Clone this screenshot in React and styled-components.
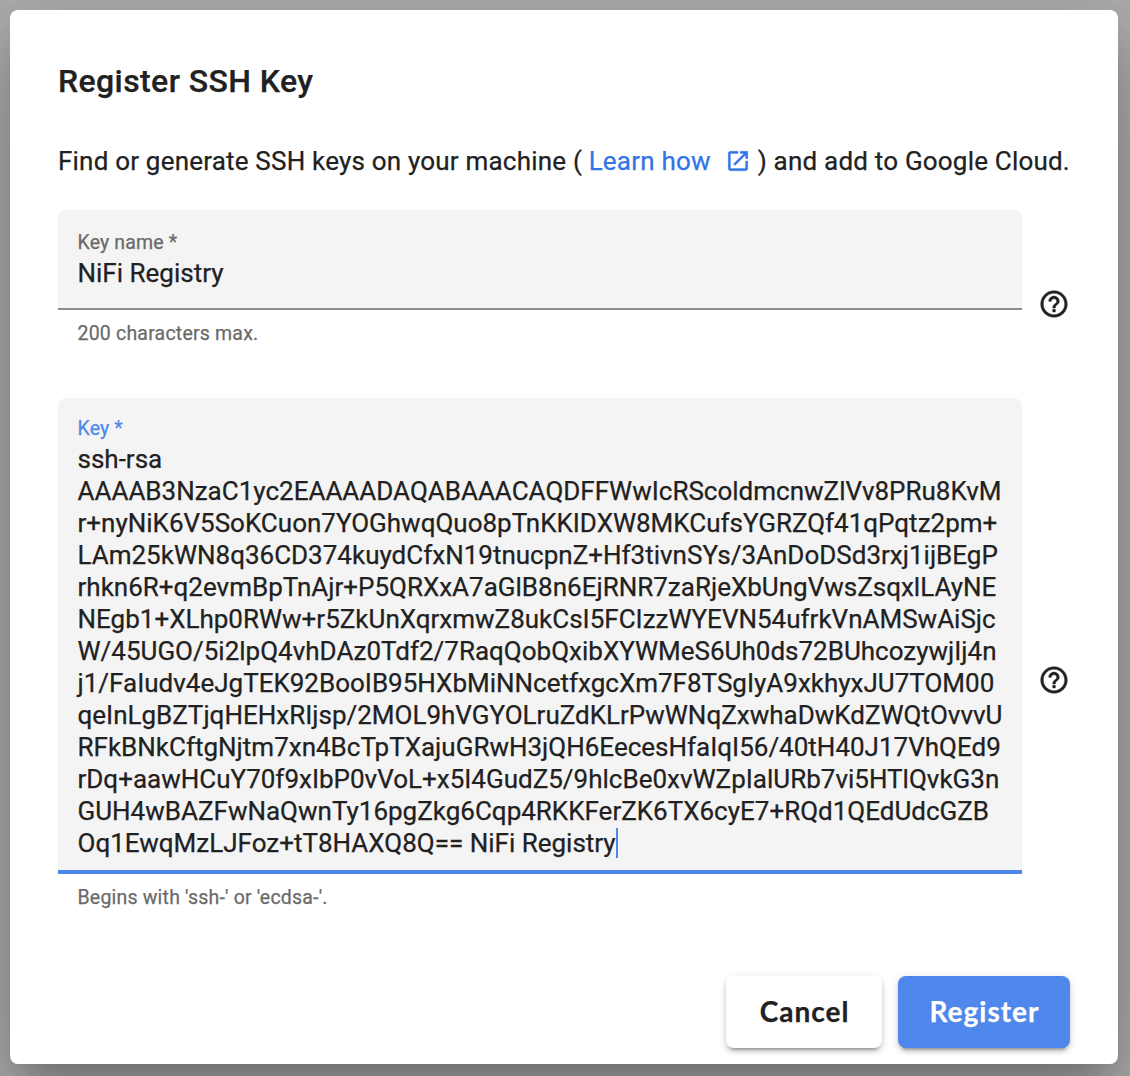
import React from "react";
import styled, { createGlobalStyle } from "styled-components";

const GlobalStyle = createGlobalStyle`
  *, *::before, *::after { box-sizing: border-box; }
  html, body { margin: 0; height: 100%; }
  body {
    background: #adadad;
    font-family: Roboto, "Liberation Sans", sans-serif;
    color: #212121;
    overflow: hidden;
    -webkit-text-stroke: 0.25px currentColor;
  }
`;

const Backdrop = styled.div`
  width: 1130px;
  height: 1076px;
  padding: 10px 12px 12px 10px;
  display: flex;
`;

const Dialog = styled.section`
  flex: none;
  width: 1108px;
  display: flex;
  flex-direction: column;
  padding: 48px 48px 16px;
  background: #fff;
  border-radius: 8px;
  box-shadow: 0 22px 30px -14px rgba(0, 0, 0, 0.2),
    0 48px 76px 6px rgba(0, 0, 0, 0.14), 0 18px 92px 16px rgba(0, 0, 0, 0.12);
`;

const Title = styled.h1`
  margin: 0;
  font-size: 32px;
  line-height: 46px;
  font-weight: 500;
  letter-spacing: 0.4px;
`;

const Intro = styled.p`
  margin: 36px 0 0;
  height: 42px;
  display: flex;
  align-items: center;
  font-size: 26px;
  line-height: 42px;
  letter-spacing: 0.2px;
  white-space: pre;
`;

const Link = styled.a`
  display: flex;
  align-items: center;
  color: #3174e5;
`;

const LinkIcon = styled.svg`
  width: 26px;
  height: 26px;
  margin: 0 7px 0 14px;
  fill: currentColor;
  stroke: currentColor;
  stroke-width: 0.3px;
`;

const FieldRow = styled.div`
  display: flex;
  align-items: center;
  justify-content: space-between;
  width: 1012px;
  height: ${(p) => p.$height}px;
  margin-top: ${(p) => p.$top}px;
`;

const Field = styled.div`
  width: 964px;
  height: 100%;
`;

const FieldBox = styled.div`
  height: ${(p) => p.$height}px;
  padding: ${(p) => (p.$focused ? 19 : 21)}px 19.5px 0;
  background: #f4f4f4;
  border-radius: 8px 8px 0 0;
  border-bottom: ${(p) => (p.$focused ? "4px solid #4e86ea" : "2px solid #8c8c8c")};
`;

const Label = styled.div`
  font-size: 19.5px;
  line-height: 24px;
  letter-spacing: 0.15px;
  color: ${(p) => (p.$focused ? "#4f87ec" : "#6a6a6a")};
`;

const Value = styled.div`
  margin-top: 2px;
  font-size: 26px;
  line-height: 32px;
  white-space: pre;
`;

const Caret = styled.span`
  display: inline-block;
  width: 2px;
  height: 30px;
  margin-right: -2px;
  vertical-align: -6px;
  background: #4e86ea;
`;

const Hint = styled.div`
  padding: 12px 19.5px 0;
  font-size: 19.5px;
  line-height: 24px;
  letter-spacing: 0.2px;
  color: #6a6a6a;
`;

const HelpSvg = styled.svg`
  width: 32px;
  height: 32px;
  fill: #212121;
  stroke: #212121;
  stroke-width: 0.3px;
`;

const Actions = styled.footer`
  display: flex;
  justify-content: flex-end;
  gap: 16px;
  margin-top: auto;
  width: 1012px;
`;

const Button = styled.button`
  width: ${(p) => p.$width}px;
  height: 72px;
  padding: 0 0 2px 1px;
  border: 0;
  border-radius: 8px;
  background: ${(p) => (p.$primary ? "#4f87ed" : "#fff")};
  color: ${(p) => (p.$primary ? "#fff" : "#212121")};
  font-family: Lato, "Open Sans", sans-serif;
  font-size: 28px;
  font-weight: 700;
  letter-spacing: 1px;
  box-shadow: 0 6px 2px -4px rgba(0, 0, 0, 0.2), 0 4px 4px rgba(0, 0, 0, 0.14),
    0 2px 10px rgba(0, 0, 0, 0.12);
`;

const keyLines = [
  "ssh-rsa",
  "AAAAB3NzaC1yc2EAAAADAQABAAACAQDFFWwIcRScoldmcnwZlVv8PRu8KvM",
  "r+nyNiK6V5SoKCuon7YOGhwqQuo8pTnKKIDXW8MKCufsYGRZQf41qPqtz2pm+",
  "LAm25kWN8q36CD374kuydCfxN19tnucpnZ+Hf3tivnSYs/3AnDoDSd3rxj1ijBEgP",
  "rhkn6R+q2evmBpTnAjr+P5QRXxA7aGlB8n6EjRNR7zaRjeXbUngVwsZsqxlLAyNE",
  "NEgb1+XLhp0RWw+r5ZkUnXqrxmwZ8ukCsI5FCIzzWYEVN54ufrkVnAMSwAiSjc",
  "W/45UGO/5i2lpQ4vhDAz0Tdf2/7RaqQobQxibXYWMeS6Uh0ds72BUhcozywjIj4n",
  "j1/FaIudv4eJgTEK92BooIB95HXbMiNNcetfxgcXm7F8TSgIyA9xkhyxJU7TOM00",
  "qeInLgBZTjqHEHxRIjsp/2MOL9hVGYOLruZdKLrPwWNqZxwhaDwKdZWQtOvvvU",
  "RFkBNkCftgNjtm7xn4BcTpTXajuGRwH3jQH6EecesHfaIqI56/40tH40J17VhQEd9",
  "rDq+aawHCuY70f9xIbP0vVoL+x5I4GudZ5/9hlcBe0xvWZpIalURb7vi5HTlQvkG3n",
  "GUH4wBAZFwNaQwnTy16pgZkg6Cqp4RKKFerZK6TX6cyE7+RQd1QEdUdcGZB",
  "Oq1EwqMzLJFoz+tT8HAXQ8Q== NiFi Registry",
];

const HelpIcon = () => (
  <HelpSvg viewBox="0 0 24 24" aria-hidden="true">
    <path d="M11 18h2v-2h-2v2zm1-16C6.48 2 2 6.48 2 12s4.48 10 10 10 10-4.48 10-10S17.52 2 12 2zm0 18c-4.41 0-8-3.59-8-8s3.59-8 8-8 8 3.59 8 8-3.59 8-8 8zm0-14c-2.21 0-4 1.79-4 4h2c0-1.1.9-2 2-2s2 .9 2 2c0 2-3 1.75-3 5h2c0-2.25 3-2.5 3-5 0-2.21-1.79-4-4-4z" />
  </HelpSvg>
);

export default function App() {
  return (
    <>
      <GlobalStyle />
      <Backdrop>
        <Dialog>
          <Title>Register SSH Key</Title>
          <Intro>
            <span>Find or generate SSH keys on your machine ( </span>
            <Link>
              Learn how
              <LinkIcon viewBox="0 0 24 24" aria-hidden="true">
                <path d="M19 19H5V5h7V3H5c-1.11 0-2 .9-2 2v14c0 1.1.89 2 2 2h14c1.1 0 2-.9 2-2v-7h-2v7zM14 3v2h3.59l-9.83 9.83 1.41 1.41L19 6.41V10h2V3h-7z" />
              </LinkIcon>
            </Link>
            <span>) and add to Google Cloud.</span>
          </Intro>
          <FieldRow $top={28} $height={188}>
            <Field>
              <FieldBox $height={100}>
                <Label>Key name *</Label>
                <Value>NiFi Registry</Value>
              </FieldBox>
              <Hint>200 characters max.</Hint>
            </Field>
            <HelpIcon />
          </FieldRow>
          <FieldRow $top={0} $height={564}>
            <Field>
              <FieldBox $focused $height={476}>
                <Label $focused>Key *</Label>
                <Value>
                  {keyLines.join("\n")}
                  <Caret />
                </Value>
              </FieldBox>
              <Hint>Begins with 'ssh-' or 'ecdsa-'.</Hint>
            </Field>
            <HelpIcon />
          </FieldRow>
          <Actions>
            <Button $width={156}>Cancel</Button>
            <Button $primary $width={172}>Register</Button>
          </Actions>
        </Dialog>
      </Backdrop>
    </>
  );
}
